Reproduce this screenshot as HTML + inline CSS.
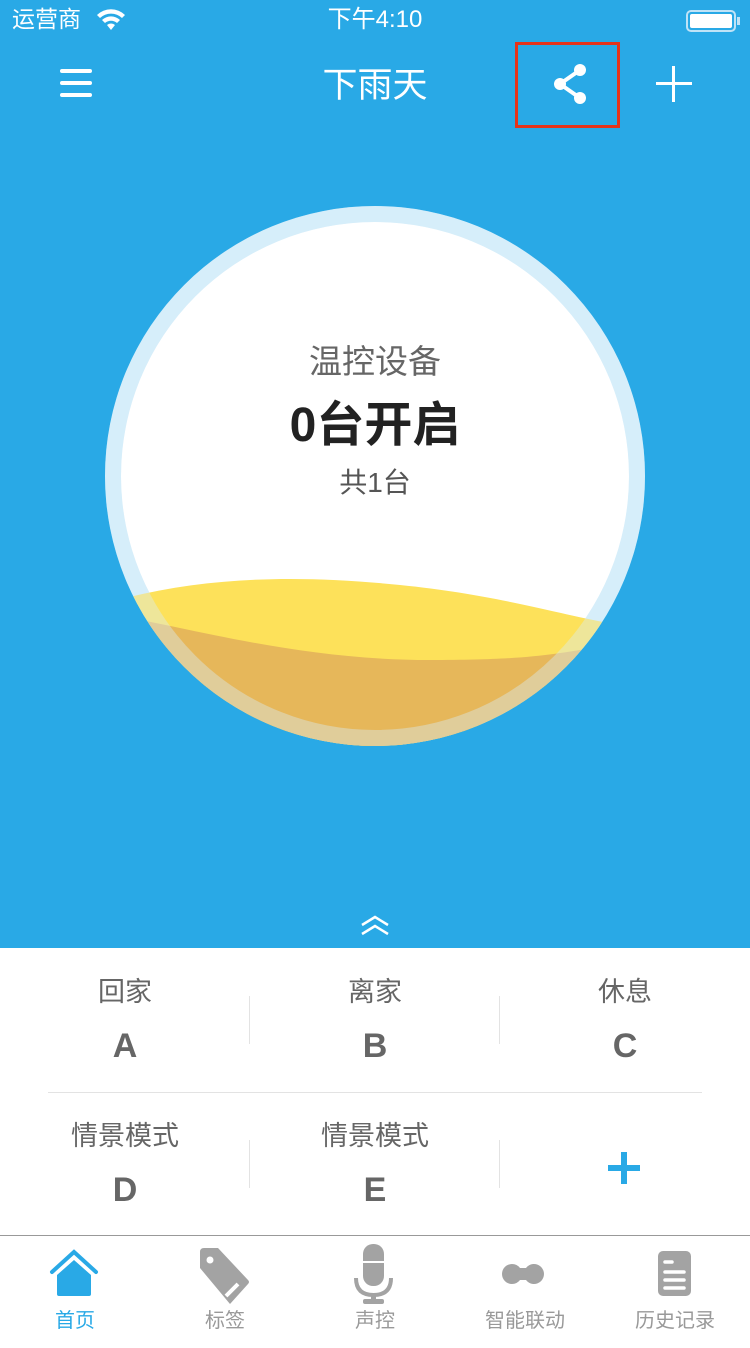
<!DOCTYPE html>
<html><head><meta charset="utf-8"><style>
*{margin:0;padding:0;box-sizing:border-box}
body{width:750px;height:1334px;background:#29a9e6;position:relative;overflow:hidden;font-family:"Liberation Sans","Noto Sans CJK SC",sans-serif}
.a{position:absolute}
.t{color:#fff}
.panel{position:absolute;left:0;top:948px;width:750px;height:400px;background:#fff}
.cell{position:absolute;width:250px;text-align:center;color:#666;line-height:1.2}
.cell .n{font-size:27px}
.cell .l{font-size:34px;font-weight:bold;margin-top:18px}
.vl{position:absolute;width:1px;height:48px;background:#e3e3e3}
.tab{position:absolute;top:1309px;width:150px;text-align:center;font-size:20px;color:#999;line-height:1.2}
</style></head><body>
<div class="a t" style="left:12px;top:6px;font-size:23px;line-height:1.2">运营商</div>
<svg class="a" style="left:96px;top:9px" width="30" height="22" viewBox="0 0 30 22"><path d="M15 21l-4-5a6 6 0 0 1 8 0z M6 11a13 13 0 0 1 18 0l-3 3a9 9 0 0 0-12 0z M1 6a20 20 0 0 1 28 0l-3 3a16 16 0 0 0-22 0z" fill="#fff"/></svg>
<div class="a t" style="left:0;width:750px;text-align:center;top:6px;font-size:24px;line-height:1.2">下午4:10</div>
<div class="a" style="left:686px;top:10px;width:50px;height:22px;border:2px solid #bfe3f7;border-radius:5px;padding:2px"><div style="background:#fff;width:100%;height:100%;border-radius:2px"></div></div>
<div class="a" style="left:737px;top:17px;width:3px;height:8px;background:#bfe3f7"></div>
<div class="a" style="left:60px;top:69px;width:32px;height:4px;background:#fff;border-radius:2px"></div>
<div class="a" style="left:60px;top:81px;width:32px;height:4px;background:#fff;border-radius:2px"></div>
<div class="a" style="left:60px;top:93px;width:32px;height:4px;background:#fff;border-radius:2px"></div>
<div class="a t" style="left:0;width:750px;text-align:center;top:65px;font-size:35px;line-height:1.2">下雨天</div>
<div class="a" style="left:515px;top:42px;width:105px;height:86px;border:3px solid #e5331b"></div>
<svg class="a" style="left:550px;top:62px" width="40" height="44" viewBox="0 0 40 44"><g fill="#fff"><circle cx="30" cy="8" r="6"/><circle cx="10" cy="22" r="6"/><circle cx="30" cy="36" r="6"/></g><path d="M30 8L10 22L30 36" stroke="#fff" stroke-width="4" fill="none"/></svg>
<div class="a" style="left:656px;top:82px;width:36px;height:3px;background:#fff"></div>
<div class="a" style="left:672px;top:66px;width:3px;height:36px;background:#fff"></div>
<svg class="a" style="left:0;top:0" width="750" height="948">
<defs><clipPath id="c"><circle cx="375" cy="476" r="270"/></clipPath></defs>
<circle cx="375" cy="476" r="270" fill="#d6eefa"/>
<circle cx="375" cy="476" r="254" fill="#fff"/>
<g clip-path="url(#c)">
<path d="M100 605 C200 575 300 575 400 585 S560 615 620 625 L650 750 L100 750Z" fill="#fde15a"/>
<path d="M100 612 C200 630 300 660 430 660 S560 650 650 640 L650 750 L100 750Z" fill="#e6b75a"/>
</g>
<circle cx="375" cy="476" r="262" fill="none" stroke="#d6eefa" stroke-width="16" opacity="0.4"/>
<path d="M362 925l13-8l13 8M362 934l13-8l13 8" stroke="#fff" stroke-width="2.5" fill="none"/>
</svg>
<div class="a" style="left:0;width:750px;text-align:center;top:342px;font-size:33px;color:#666;line-height:1.2">温控设备</div>
<div class="a" style="left:0;width:750px;text-align:center;top:397px;font-size:48px;font-weight:bold;color:#222;line-height:1.2">0台开启</div>
<div class="a" style="left:0;width:750px;text-align:center;top:466px;font-size:28px;color:#555;line-height:1.2">共1台</div>
<div class="panel"></div>
<div class="cell" style="left:0;top:976px"><div class="n">回家</div><div class="l">A</div></div>
<div class="cell" style="left:250px;top:976px"><div class="n">离家</div><div class="l">B</div></div>
<div class="cell" style="left:500px;top:976px"><div class="n">休息</div><div class="l">C</div></div>
<div class="cell" style="left:0;top:1120px"><div class="n">情景模式</div><div class="l">D</div></div>
<div class="cell" style="left:250px;top:1120px"><div class="n">情景模式</div><div class="l">E</div></div>
<div class="a" style="left:608px;top:1165px;width:32px;height:6px;background:#29a9e6"></div>
<div class="a" style="left:621px;top:1152px;width:6px;height:32px;background:#29a9e6"></div>
<div class="vl" style="left:249px;top:996px"></div><div class="vl" style="left:499px;top:996px"></div>
<div class="vl" style="left:249px;top:1140px"></div><div class="vl" style="left:499px;top:1140px"></div>
<div class="a" style="left:48px;top:1092px;width:654px;height:1px;background:#e3e3e3"></div>
<div class="a" style="left:0;top:1235px;width:750px;height:1px;background:#999"></div>
<svg class="a" style="left:0;top:1240px" width="750" height="66">
<path d="M52 32L74 12L96 32" stroke="#29a9e6" stroke-width="4" fill="none" stroke-linecap="round"/>
<path d="M57 35L74 20L91 35V54Q91 56 89 56H59Q57 56 57 54Z" fill="#29a9e6"/>
<path d="M200 12Q200 8 204 8H218L248 40Q250 42 248 44L230 64L200 28Z" fill="#a3a3a3"/>
<circle cx="210" cy="20" r="3.5" fill="#fff"/><path d="M226 56L238 44" stroke="#fff" stroke-width="4"/>
<rect x="363" y="4" width="21" height="42" rx="10" fill="#a3a3a3"/><path d="M363 22H384" stroke="#fff" stroke-width="2"/>
<path d="M356 38Q356 55 373.5 55Q391 55 391 38" stroke="#a3a3a3" stroke-width="4" fill="none"/>
<rect x="371" y="54" width="5" height="7" fill="#a3a3a3"/><rect x="363" y="59" width="21" height="5" rx="2" fill="#a3a3a3"/>
<path d="M512 24a10 10 0 1 0 0 20a10 10 0 0 0 8-4h6a10 10 0 1 0 0-12h-6a10 10 0 0 0-8-4z" fill="#a3a3a3"/>
<rect x="658" y="11" width="33" height="45" rx="5" fill="#a3a3a3"/>
<g stroke="#fff" stroke-width="3.5" stroke-linecap="round"><path d="M665 22H672M665 32H684M665 40H684M665 48H684"/></g>
</svg>
<div class="tab" style="left:0;color:#29a9e6">首页</div>
<div class="tab" style="left:150px">标签</div>
<div class="tab" style="left:300px">声控</div>
<div class="tab" style="left:450px">智能联动</div>
<div class="tab" style="left:600px">历史记录</div>
</body></html>
